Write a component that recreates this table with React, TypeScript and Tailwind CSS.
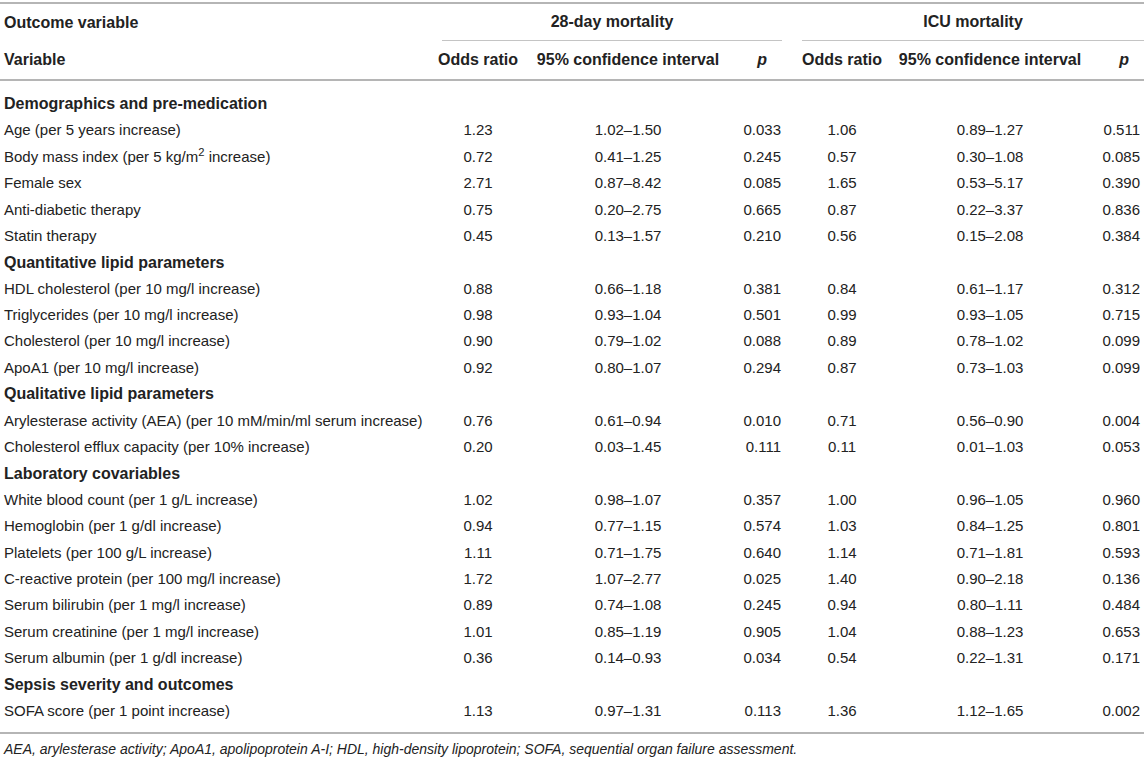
import React from "react";

type Row =
  | { kind: "section"; label: string }
  | { kind: "data"; label: React.ReactNode; v: [string, string, string, string, string, string] };

const rows: Row[] = [
  { kind: "section", label: "Demographics and pre-medication" },
  { kind: "data", label: "Age (per 5 years increase)", v: ["1.23", "1.02–1.50", "0.033", "1.06", "0.89–1.27", "0.511"] },
  {
    kind: "data",
    label: (
      <>
        Body mass index (per 5 kg/m<sup>2</sup> increase)
      </>
    ),
    v: ["0.72", "0.41–1.25", "0.245", "0.57", "0.30–1.08", "0.085"],
  },
  { kind: "data", label: "Female sex", v: ["2.71", "0.87–8.42", "0.085", "1.65", "0.53–5.17", "0.390"] },
  { kind: "data", label: "Anti-diabetic therapy", v: ["0.75", "0.20–2.75", "0.665", "0.87", "0.22–3.37", "0.836"] },
  { kind: "data", label: "Statin therapy", v: ["0.45", "0.13–1.57", "0.210", "0.56", "0.15–2.08", "0.384"] },
  { kind: "section", label: "Quantitative lipid parameters" },
  { kind: "data", label: "HDL cholesterol (per 10 mg/l increase)", v: ["0.88", "0.66–1.18", "0.381", "0.84", "0.61–1.17", "0.312"] },
  { kind: "data", label: "Triglycerides (per 10 mg/l increase)", v: ["0.98", "0.93–1.04", "0.501", "0.99", "0.93–1.05", "0.715"] },
  { kind: "data", label: "Cholesterol (per 10 mg/l increase)", v: ["0.90", "0.79–1.02", "0.088", "0.89", "0.78–1.02", "0.099"] },
  { kind: "data", label: "ApoA1 (per 10 mg/l increase)", v: ["0.92", "0.80–1.07", "0.294", "0.87", "0.73–1.03", "0.099"] },
  { kind: "section", label: "Qualitative lipid parameters" },
  { kind: "data", label: "Arylesterase activity (AEA) (per 10 mM/min/ml serum increase)", v: ["0.76", "0.61–0.94", "0.010", "0.71", "0.56–0.90", "0.004"] },
  { kind: "data", label: "Cholesterol efflux capacity (per 10% increase)", v: ["0.20", "0.03–1.45", "0.111", "0.11", "0.01–1.03", "0.053"] },
  { kind: "section", label: "Laboratory covariables" },
  { kind: "data", label: "White blood count (per 1 g/L increase)", v: ["1.02", "0.98–1.07", "0.357", "1.00", "0.96–1.05", "0.960"] },
  { kind: "data", label: "Hemoglobin (per 1 g/dl increase)", v: ["0.94", "0.77–1.15", "0.574", "1.03", "0.84–1.25", "0.801"] },
  { kind: "data", label: "Platelets (per 100 g/L increase)", v: ["1.11", "0.71–1.75", "0.640", "1.14", "0.71–1.81", "0.593"] },
  { kind: "data", label: "C-reactive protein (per 100 mg/l increase)", v: ["1.72", "1.07–2.77", "0.025", "1.40", "0.90–2.18", "0.136"] },
  { kind: "data", label: "Serum bilirubin (per 1 mg/l increase)", v: ["0.89", "0.74–1.08", "0.245", "0.94", "0.80–1.11", "0.484"] },
  { kind: "data", label: "Serum creatinine (per 1 mg/l increase)", v: ["1.01", "0.85–1.19", "0.905", "1.04", "0.88–1.23", "0.653"] },
  { kind: "data", label: "Serum albumin (per 1 g/dl increase)", v: ["0.36", "0.14–0.93", "0.034", "0.54", "0.22–1.31", "0.171"] },
  { kind: "section", label: "Sepsis severity and outcomes" },
  { kind: "data", label: "SOFA score (per 1 point increase)", v: ["1.13", "0.97–1.31", "0.113", "1.36", "1.12–1.65", "0.002"] },
];

export default function App() {
  return (
    <div
      className="w-[1144px] h-[759px] bg-white pt-[2px] text-[#222222] text-[15px] overflow-hidden"
      style={{ fontFamily: '"Liberation Sans", Arial, Helvetica, sans-serif' }}
    >
      <table className="w-[1144px] table-fixed border-collapse">
        <colgroup>
          <col className="w-[433px]" />
          <col className="w-[90px]" />
          <col className="w-[210px]" />
          <col className="w-[65px]" />
          <col className="w-[88px]" />
          <col className="w-[208px]" />
          <col className="w-[50px]" />
        </colgroup>
        <thead className="text-[16px]">
          <tr className="border-t-2 border-[#b5b5b5]">
            <th className="h-[37px] p-0 pl-[4px] text-left font-bold align-middle">Outcome variable</th>
            <th colSpan={3} className="h-[37px] p-0 font-bold align-bottom">
              <div className="ml-[9px] mr-[16px] h-[37px] flex items-center justify-center border-b border-[#c4c4c4]">
                28-day mortality
              </div>
            </th>
            <th colSpan={3} className="h-[37px] p-0 font-bold align-bottom">
              <div className="ml-[4px] h-[37px] flex items-center justify-center border-b border-[#c4c4c4]">
                ICU mortality
              </div>
            </th>
          </tr>
          <tr className="border-b-2 border-[#b5b5b5]">
            <th className="h-[39px] p-0 pl-[4px] text-left font-bold">Variable</th>
            <th className="h-[39px] p-0 font-bold text-center">Odds ratio</th>
            <th className="h-[39px] p-0 font-bold text-center">95% confidence interval</th>
            <th className="h-[39px] p-0 pr-[31px] font-bold text-right italic">p</th>
            <th className="h-[39px] p-0 font-bold text-center">Odds ratio</th>
            <th className="h-[39px] p-0 font-bold text-center">95% confidence interval</th>
            <th className="h-[39px] p-0 pr-[15px] font-bold text-right italic">p</th>
          </tr>
        </thead>
        <tbody>
          <tr>
            <td colSpan={7} className="h-[11px] p-0" />
          </tr>
          {rows.map((r, i) =>
            r.kind === "section" ? (
              <tr key={i}>
                <td colSpan={7} className="h-[26.4px] p-0 pl-[4px] text-[16px] font-bold whitespace-nowrap">
                  {r.label}
                </td>
              </tr>
            ) : (
              <tr key={i}>
                <td className="h-[26.4px] p-0 pl-[4px] whitespace-nowrap">{r.label}</td>
                <td className="p-0 text-center">{r.v[0]}</td>
                <td className="p-0 text-center">{r.v[1]}</td>
                <td className="p-0 pr-[17px] text-right">{r.v[2]}</td>
                <td className="p-0 text-center">{r.v[3]}</td>
                <td className="p-0 text-center">{r.v[4]}</td>
                <td className="p-0 pr-[4px] text-right">{r.v[5]}</td>
              </tr>
            )
          )}
          <tr className="border-b-2 border-[#b5b5b5]">
            <td colSpan={7} className="h-[9px] p-0" />
          </tr>
        </tbody>
      </table>
      <p className="pl-[4px] pt-[5px] leading-[20px] italic text-[14px]">
        AEA, arylesterase activity; ApoA1, apolipoprotein A-I; HDL, high-density lipoprotein; SOFA, sequential organ
        failure assessment.
      </p>
    </div>
  );
}
